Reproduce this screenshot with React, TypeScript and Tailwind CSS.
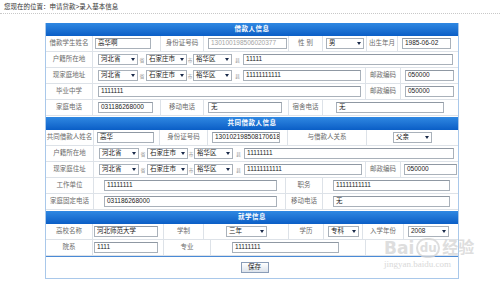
import type { ReactNode } from "react";

// shared cell pieces for the old-style form table
const Label = ({ className = "", children }: { className?: string; children?: ReactNode }) => (
  <div className={`flex h-full shrink-0 items-center justify-center whitespace-nowrap border-r border-[#dde2e8] text-[#6b6b6b] ${className}`}>
    {children}
  </div>
);

const Cell = ({ className = "", children }: { className?: string; children?: ReactNode }) => (
  <div className={`flex h-full items-center border-r border-[#dde2e8] last:border-r-0 ${className}`}>
    {children}
  </div>
);

const Input = ({ className = "", children, disabled }: { className?: string; children?: ReactNode; disabled?: boolean }) => (
  <div
    className={`flex h-[11px] shrink-0 items-center overflow-hidden whitespace-nowrap border border-[#a9b1ba] border-t-[#8f98a3] bg-white px-[2px] ${
      disabled ? "text-[#a3a3a3]" : "text-[#1a1a1a]"
    } ${className}`}
  >
    {children}
  </div>
);

const Select = ({ className = "", children }: { className?: string; children?: ReactNode }) => (
  <div className={`flex h-[11px] shrink-0 items-center justify-between border border-[#a9b1ba] bg-white pl-[2px] pr-[2px] text-[#1a1a1a] ${className}`}>
    <span className="whitespace-nowrap">{children}</span>
    <svg width="4" height="3" viewBox="0 0 4 3">
      <path d="M0 0h4L2 3z" fill="#1a2a4a" />
    </svg>
  </div>
);

const Sep = ({ className = "", children }: { className?: string; children: ReactNode }) => (
  <span className={`flex shrink-0 items-end justify-center text-[5px] leading-[8px] text-[#9a9a9a] ${className}`}>{children}</span>
);

const Row = ({ children }: { children: ReactNode }) => (
  <div className="flex h-[16px] border-b border-[#dde2e8]">{children}</div>
);

const Header = ({ children, first }: { children: ReactNode; first?: boolean }) => (
  <div
    className={`flex h-[13px] items-center justify-center bg-linear-to-b from-[#2f88e2] to-[#0a5ec6] text-[6.5px] font-bold tracking-[0.5px] text-white ${
      first ? "" : "mt-[1px]"
    }`}
  >
    {children}
  </div>
);

const AreaSelects = () => (
  <>
    <Select className="w-[40px]">河北省</Select>
    <Sep className="w-[8px]">省</Sep>
    <Select className="w-[41px]">石家庄市</Select>
    <Sep className="w-[6px]">市</Sep>
    <Select className="w-[39px]">裕华区</Select>
    <Sep className="w-[11px]">县</Sep>
  </>
);

export default function App() {
  return (
    <div className="relative h-[282px] w-[500px] overflow-hidden bg-white font-['Liberation_Sans','Noto_Sans_CJK_SC',sans-serif] text-[6.5px] leading-none">
      {/* breadcrumb */}
      <div className="h-[14px] border-b border-dotted border-[#c8c8c8] pl-[4px] pt-[4px] text-[6.5px] text-[#333]">
        您现在的位置：申请贷款&gt;录入基本信息
      </div>

      <div className="ml-[45px] mt-[9px] w-[414px] border-x border-b border-[#a9c8ea]">
        {/* borrower */}
        <Header first>借款人信息</Header>
        <Row>
          <Label className="w-[47px]">借款学生姓名</Label>
          <Cell className="w-[68px] pl-[2px]">
            <Input className="w-[56px]">高华啊</Input>
          </Cell>
          <Label className="w-[43px]">身份证号码</Label>
          <Cell className="w-[85px] pl-[4px]">
            <Input disabled className="w-[79px]">130100198506020377</Input>
          </Cell>
          <Label className="w-[34px]">性 别</Label>
          <Cell className="w-[44px] pl-[3px]">
            <Select className="w-[38px]">男</Select>
          </Cell>
          <Label className="w-[31px]">出生年月</Label>
          <Cell className="flex-1 pl-[4px]">
            <Input className="w-[49px]">1985-06-02</Input>
          </Cell>
        </Row>
        <Row>
          <Label className="w-[47px]">户籍所在地</Label>
          <Cell className="flex-1 pl-[5px]">
            <AreaSelects />
            <Input className="w-[210px]">11111</Input>
          </Cell>
        </Row>
        <Row>
          <Label className="w-[47px]">现家庭地址</Label>
          <Cell className="w-[273px] pl-[5px]">
            <AreaSelects />
            <Input className="w-[118px]">11111111111</Input>
          </Cell>
          <Label className="w-[35px]">邮政编码</Label>
          <Cell className="flex-1 pl-[4px]">
            <Input className="w-[49px]">050000</Input>
          </Cell>
        </Row>
        <Row>
          <Label className="w-[47px]">毕业中学</Label>
          <Cell className="w-[273px] pl-[5px]">
            <Input className="w-[263px]">1111111</Input>
          </Cell>
          <Label className="w-[35px]">邮政编码</Label>
          <Cell className="flex-1 pl-[4px]">
            <Input className="w-[49px]">050000</Input>
          </Cell>
        </Row>
        <Row>
          <Label className="w-[47px]">家庭电话</Label>
          <Cell className="w-[68px] pl-[5px]">
            <Input className="w-[55px]">031186268000</Input>
          </Cell>
          <Label className="w-[43px]">移动电话</Label>
          <Cell className="w-[85px] pl-[4px]">
            <Input className="w-[74px]">无</Input>
          </Cell>
          <Label className="w-[34px]">宿舍电话</Label>
          <Cell className="flex-1 pl-[13px]">
            <Input className="w-[108px]">无</Input>
          </Cell>
        </Row>

        {/* co-borrower */}
        <Header>共同借款人信息</Header>
        <Row>
          <Label className="w-[48px]">共同借款人姓名</Label>
          <Cell className="w-[66px] pl-[3px]">
            <Input className="w-[57px]">高华</Input>
          </Cell>
          <Label className="w-[48px]">身份证号码</Label>
          <Cell className="w-[80px] pl-[4px]">
            <Input className="w-[68px]">130102198508170618</Input>
          </Cell>
          <Label className="w-[79px]">与借款人关系</Label>
          <Cell className="flex-1 justify-center">
            <Select className="w-[39px]">父亲</Select>
          </Cell>
        </Row>
        <Row>
          <Label className="w-[48px]">户籍所在地</Label>
          <Cell className="flex-1 pl-[5px]">
            <AreaSelects />
            <Input className="w-[210px]">11111111</Input>
          </Cell>
        </Row>
        <Row>
          <Label className="w-[48px]">现家庭住址</Label>
          <Cell className="w-[272px] pl-[5px]">
            <AreaSelects />
            <Input className="w-[118px]">11111111111</Input>
          </Cell>
          <Label className="w-[35px]">邮政编码</Label>
          <Cell className="flex-1 pl-[3px]">
            <Input className="w-[53px]">050000</Input>
          </Cell>
        </Row>
        <Row>
          <Label className="w-[48px]">工作单位</Label>
          <Cell className="w-[192px] pl-[10px]">
            <Input className="w-[173px]">11111111</Input>
          </Cell>
          <Label className="w-[37px]">职务</Label>
          <Cell className="flex-1 pl-[10px]">
            <Input className="w-[117px]">11111111111</Input>
          </Cell>
        </Row>
        <Row>
          <Label className="w-[48px]">家庭固定电话</Label>
          <Cell className="w-[192px] pl-[10px]">
            <Input className="w-[173px]">031186268000</Input>
          </Cell>
          <Label className="w-[37px]">移动电话</Label>
          <Cell className="flex-1 pl-[10px]">
            <Input className="w-[117px]">无</Input>
          </Cell>
        </Row>

        {/* school */}
        <Header>就学信息</Header>
        <Row>
          <Label className="w-[47px]">高校名称</Label>
          <Cell className="w-[71px] pl-[1px]">
            <Input className="w-[64px]">河北师范大学</Input>
          </Cell>
          <Label className="w-[40px]">学制</Label>
          <Cell className="w-[85px] pl-[22px]">
            <Select className="w-[41px]">三年</Select>
          </Cell>
          <Label className="w-[35px]">学历</Label>
          <Cell className="w-[39px] pl-[4px]">
            <Select className="w-[31px]">专科</Select>
          </Cell>
          <Label className="w-[41px]">入学年份</Label>
          <Cell className="flex-1 pl-[4px]">
            <Select className="w-[41px]">2008</Select>
          </Cell>
        </Row>
        <Row>
          <Label className="w-[47px]">院系</Label>
          <Cell className="w-[71px] pl-[1px]">
            <Input className="w-[64px]">1111</Input>
          </Cell>
          <Label className="w-[47px]">专业</Label>
          <Cell className="w-[155px] pl-[21px]">
            <Input className="w-[107px]">11111111</Input>
          </Cell>
          <Cell className="flex-1" />
        </Row>

        {/* save */}
        <div className="flex h-[22px] items-center justify-center border-t border-[#4a8ad6] pl-[5px]">
          <button className="flex h-[11px] w-[28px] items-center justify-center border border-[#8a9db8] bg-linear-to-b from-white to-[#dce3ec] text-[6.5px] text-[#222]">
            保存
          </button>
        </div>
      </div>

      {/* watermark */}
      <div className="pointer-events-none absolute left-[384px] top-[238px] flex flex-col items-start opacity-80">
        <div className="flex items-center font-['DejaVu_Sans','Noto_Sans_CJK_SC',sans-serif] text-[17px] font-bold leading-none text-[#d6d6d6]">
          <span>Bai</span>
          <span className="mx-[2px] flex h-[20px] w-[24px] items-center justify-center rounded-full border-2 border-[#d6d6d6] text-[12px]">du</span>
          <span className="text-[16px]">经验</span>
        </div>
        <div className="mt-[2px] font-['Liberation_Serif',serif] text-[9px] text-[#d0d0d0]">jingyan.baidu.com</div>
      </div>
    </div>
  );
}
